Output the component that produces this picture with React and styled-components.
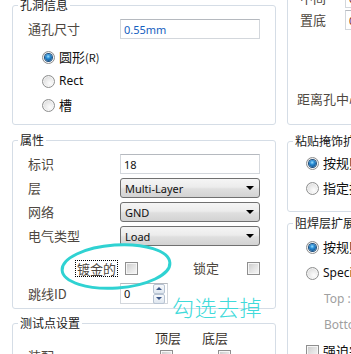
import React from 'react';
import styled, { createGlobalStyle } from 'styled-components';

const Global = createGlobalStyle`
  html, body { margin: 0; padding: 0; background: #fff; }
  body { font-family: "Noto Sans CJK SC", "Noto Sans", sans-serif; }
`;

const CJK = `"Noto Sans CJK SC", "Noto Sans", sans-serif`;
const LATIN = `"Noto Sans", "Noto Sans CJK SC", sans-serif`;

const Viewport = styled.div`
  position: relative;
  width: 351px;
  height: 354px;
  overflow: hidden;
  background: #fff;
`;

const Canvas = styled.div`
  display: flex;
  align-items: flex-start;
  gap: 11px;
  padding-left: 12px;
  margin-top: -3px;
`;

const Column = styled.div`
  flex: none;
  display: flex;
  flex-direction: column;
  width: ${p => p.$w}px;
  margin-top: ${p => p.$offset || 0}px;
`;

const Group = styled.fieldset`
  margin: ${p => p.$mt || 0}px 0 0;
  padding: ${p => p.$pt || 0}px 0 ${p => p.$pb || 0}px;
  border: 1px solid #d5dde6;
  border-radius: 3px;
  min-width: 0;
  display: flex;
  flex-direction: column;
`;

const Legend = styled.legend`
  margin-left: 5px;
  padding: 0 2px;
  font: 12px/16px ${CJK};
  color: #1a1a1a;
`;

const FormGrid = styled.div`
  display: grid;
  grid-template-columns: ${p => p.$cols};
  row-gap: ${p => p.$gap}px;
  padding-left: ${p => p.$pl}px;
  align-items: center;
`;

const Label = styled.span`
  font: 13px/20px ${CJK};
  color: #4e4740;
  white-space: nowrap;
`;

const Field = styled.div`
  box-sizing: border-box;
  height: ${p => p.$h || 20}px;
  display: flex;
  align-items: center;
  padding-left: 3px;
  border: 1px solid #d3d7dc;
  border-top-color: #b5b9bf;
  background: #fff;
  font: 11px ${LATIN};
  color: ${p => p.$color || '#111'};
  white-space: nowrap;
  overflow: hidden;
`;

const Select = styled.div`
  box-sizing: border-box;
  height: 20px;
  display: flex;
  align-items: center;
  justify-content: space-between;
  padding: 0 5px 0 4px;
  border: 1px solid #707070;
  border-radius: 3px;
  background: linear-gradient(#f5f5f5, #ececec 45%, #dfdfdf 55%, #d3d3d3);
  font: 11px ${LATIN};
  color: #111;
  &::after {
    content: "";
    border-left: 4px solid transparent;
    border-right: 4px solid transparent;
    border-top: 4px solid #000;
  }
`;

const RadioList = styled.div`
  display: flex;
  flex-direction: column;
  gap: ${p => p.$gap}px;
  margin-top: ${p => p.$mt || 0}px;
  padding-left: ${p => p.$pl}px;
`;

const OptionRow = styled.div`
  display: flex;
  align-items: center;
  gap: 4px;
  height: 16px;
  padding-left: ${p => p.$indent || 0}px;
  font: 12px/16px ${LATIN};
  color: ${p => p.$muted ? '#a0a0a0' : '#111'};
  white-space: nowrap;
`;

const CjkText = styled.span`
  font: 13px/16px ${CJK};
  color: #111;
`;

const Radio = styled.span`
  flex: none;
  box-sizing: border-box;
  width: 13px;
  height: 13px;
  border-radius: 50%;
  border: 1px solid #8e8f8f;
  background: radial-gradient(circle at 62% 66%, #fdfdfd 0%, #e8e8e8 50%, #cdcdcd 100%);
  box-shadow: inset 0 0 0 1px rgba(255, 255, 255, 0.6);
  display: grid;
  place-items: center;
  &::after {
    content: "";
    display: ${p => (p.$checked ? 'block' : 'none')};
    width: 7px;
    height: 7px;
    border-radius: 50%;
    background: radial-gradient(circle at 45% 35%, #9be0ff 0%, #2b8ed6 35%, #0b4a86 85%);
    box-shadow: 0 0 0 1px #1d4f7e;
  }
`;

const Check = styled.span`
  flex: none;
  display: block;
  box-sizing: border-box;
  width: 13px;
  height: 13px;
  margin-left: ${p => p.$ml || 0}px;
  border: 1px solid #8f8f8f;
  background: linear-gradient(135deg, #c9c9c9 0%, #e3e3e3 50%, #f8f8f8 100%);
  box-shadow: inset 0 0 0 1px #f6f6f6;
`;

const CheckRow = styled.div`
  display: flex;
  align-items: center;
  height: 16px;
  margin-top: 14px;
  padding-left: 63px;
`;

const FocusLabel = styled.span`
  font: 13px/15px ${CJK};
  color: #4e4740;
  padding: 0 1px;
  outline: 1px dotted #000;
  outline-offset: 0;
`;

const PlainLabel = styled.span`
  font: 13px/16px ${CJK};
  color: #4e4740;
  margin-left: ${p => p.$ml || 0}px;
  margin-right: ${p => p.$mr || 0}px;
`;

const SpinRow = styled.div`
  display: grid;
  grid-template-columns: 92px 48px;
  align-items: center;
  padding-left: 15px;
  margin-top: 7px;
`;

const Spin = styled.div`
  box-sizing: border-box;
  height: 21px;
  display: flex;
  align-items: center;
  justify-content: space-between;
  padding: 0 2px 0 3px;
  border: 1px solid #d3d7dc;
  border-top-color: #b5b9bf;
  font: 11px ${LATIN};
  color: #111;
`;

const SpinButtons = styled.div`
  display: flex;
  flex-direction: column;
`;

const SpinButton = styled.span`
  box-sizing: border-box;
  width: 12px;
  height: 10px;
  display: grid;
  place-items: center;
  border: 1px solid #b7c3d2;
  border-radius: 2px;
  background: linear-gradient(#f7f9fc, #dfe7f0);
  &::after {
    content: "";
    border-left: 3px solid transparent;
    border-right: 3px solid transparent;
    ${p => (p.$down ? 'border-top: 3px solid #3b5688;' : 'border-bottom: 3px solid #3b5688;')}
  }
`;

const TestGrid = styled.div`
  display: grid;
  grid-template-columns: 127px 47px 47px;
  grid-auto-rows: 14px;
  row-gap: 4px;
  padding-left: 15px;
  align-items: center;
  font: 13px/14px ${CJK};
  color: #4e4740;
`;

const Header = styled.span`
  color: #3a332d;
  white-space: nowrap;
`;

const Note = styled.div`
  font: 13px/16px ${CJK};
  color: #4e4740;
  white-space: nowrap;
  margin-top: ${p => p.$mt}px;
  padding-left: ${p => p.$pl}px;
`;

const Overlay = styled.svg`
  position: absolute;
  left: 0;
  top: 0;
  pointer-events: none;
`;

const Annotation = styled.div`
  position: absolute;
  left: 172px;
  top: 293px;
  font: 300 22px/26px ${CJK};
  color: #40dada;
  letter-spacing: 0.5px;
  white-space: nowrap;
`;

export default function App() {
  return (
    <Viewport>
      <Global />
      <Canvas>
        <Column $w={264}>
          <Group $pt={6} $pb={11}>
            <Legend>孔洞信息</Legend>
            <FormGrid $cols="92px 140px" $gap={4} $pl={15}>
              <Label>通孔尺寸</Label>
              <Field $color="#1560c0">0.55mm</Field>
            </FormGrid>
            <RadioList $gap={8} $mt={10} $pl={29}>
              <OptionRow>
                <Radio $checked />
                <CjkText>圆形<small style={{ fontSize: 11 }}>(R)</small></CjkText>
              </OptionRow>
              <OptionRow>
                <Radio />
                Rect
              </OptionRow>
              <OptionRow>
                <Radio />
                <CjkText>槽</CjkText>
              </OptionRow>
            </RadioList>
          </Group>

          <Group $mt={7} $pt={6} $pb={4}>
            <Legend>属性</Legend>
            <FormGrid $cols="92px 140px" $gap={4} $pl={15}>
              <Label>标识</Label>
              <Field>18</Field>
              <Label>层</Label>
              <Select>Multi-Layer</Select>
              <Label>网络</Label>
              <Select>GND</Select>
              <Label>电气类型</Label>
              <Select>Load</Select>
            </FormGrid>
            <CheckRow>
              <FocusLabel>镀金的</FocusLabel>
              <Check $ml={8} />
              <PlainLabel $ml={55} $mr={28}>锁定</PlainLabel>
              <Check />
            </CheckRow>
            <SpinRow>
              <Label>跳线ID</Label>
              <Spin>
                0
                <SpinButtons>
                  <SpinButton />
                  <SpinButton $down />
                </SpinButtons>
              </Spin>
            </SpinRow>
          </Group>

          <Group $mt={6} $pt={0} $pb={10}>
            <Legend>测试点设置</Legend>
            <TestGrid>
              <span />
              <Header>顶层</Header>
              <Header>底层</Header>
              <span>装配</span>
              <Check $ml={5} />
              <Check $ml={16} />
            </TestGrid>
          </Group>
        </Column>

        <Column $w={220} $offset={-42}>
          <Group $pt={10} $pb={17}>
            <FormGrid $cols="45px 150px" $gap={2} $pl={12}>
              <Label>置顶</Label>
              <Field $color="#7a2a10">0mm</Field>
              <Label>中间</Label>
              <Field $color="#7a2a10">0mm</Field>
              <Label>置底</Label>
              <Field $color="#7a2a10">0mm</Field>
            </FormGrid>
            <Note $mt={61} $pl={9}>距离孔中心距离</Note>
          </Group>

          <Group $mt={8} $pt={6} $pb={15}>
            <Legend>粘贴掩饰扩展</Legend>
            <RadioList $gap={9} $pl={18}>
              <OptionRow>
                <Radio $checked />
                <CjkText>按规则扩展</CjkText>
              </OptionRow>
              <OptionRow>
                <Radio />
                <CjkText>指定扩展值</CjkText>
              </OptionRow>
            </RadioList>
          </Group>

          <Group $mt={3} $pt={8} $pb={10}>
            <Legend>阻焊层扩展</Legend>
            <RadioList $gap={10} $pl={18}>
              <OptionRow>
                <Radio $checked />
                <CjkText>按规则扩展</CjkText>
              </OptionRow>
              <OptionRow>
                <Radio />
                Specify expansion values
              </OptionRow>
              <OptionRow $muted $indent={18}>Top :</OptionRow>
              <OptionRow $muted $indent={18}>Bottom :</OptionRow>
              <OptionRow>
                <Check />
                <CjkText>强迫完成顶部覆盖</CjkText>
              </OptionRow>
            </RadioList>
          </Group>
        </Column>
      </Canvas>

      <Overlay width="351" height="354" viewBox="0 0 351 354">
        <ellipse
          cx="116"
          cy="266.5"
          rx="54"
          ry="21.5"
          transform="rotate(-4 116 266.5)"
          fill="none"
          stroke="#2fd2d2"
          strokeWidth="3"
        />
      </Overlay>
      <Annotation>勾选去掉</Annotation>
    </Viewport>
  );
}
